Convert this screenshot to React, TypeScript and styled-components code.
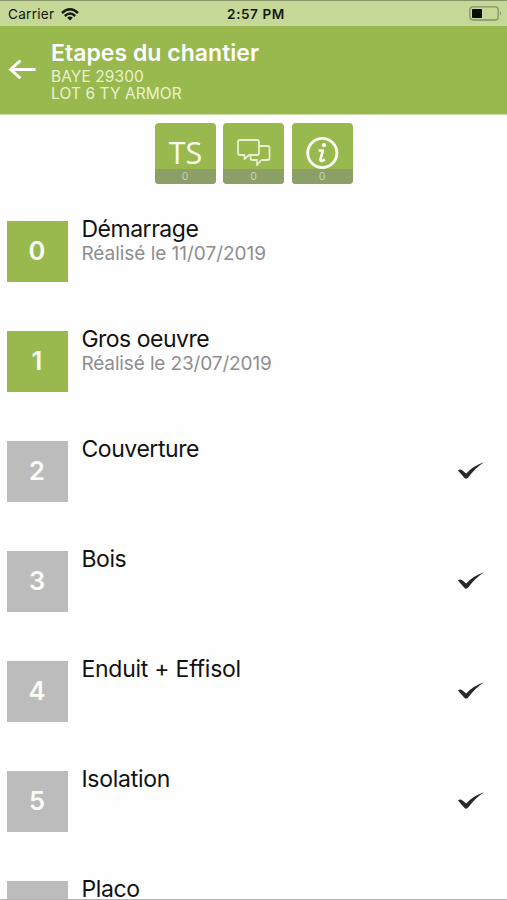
import React from "react";
import styled, { createGlobalStyle } from "styled-components";

const GlobalStyle = createGlobalStyle`
  * { box-sizing: border-box; }
  body { margin: 0; background: #fefefe; font-family: Inter, "Liberation Sans", sans-serif; }
`;

const Screen = styled.div`
  width: 507px;
  height: 900px;
  overflow: hidden;
  display: flex;
  flex-direction: column;
  background: #fefefe;
  border-bottom: 1px solid #b4b4b4;
`;

const StatusBar = styled.div`
  height: 26px;
  flex: none;
  display: grid;
  grid-template-columns: 1fr auto 1fr;
  align-items: center;
  padding: 1px 5px 0 8px;
  background: #c5d898;
  border-top: 1px solid #87956a;
  color: #15180f;
`;

const Carrier = styled.div`
  display: flex;
  align-items: center;
  gap: 7px;
  font-size: 13.6px;
  letter-spacing: 0.25px;
`;

const Clock = styled.div`
  padding-left: 2px;
  font-size: 13.6px;
  font-weight: 600;
  letter-spacing: 0.55px;
`;

const BatterySlot = styled.div`
  display: flex;
  justify-content: flex-end;
  padding-bottom: 2px;
`;

const Header = styled.header`
  height: 89px;
  flex: none;
  display: flex;
  background: #99b94f;
  border-bottom: 1px solid #cbdca6;
  padding: 13px 8px 0;
`;

const BackButton = styled.button`
  width: 43px;
  height: 60px;
  padding: 0;
  border: 0;
  background: none;
  display: flex;
  align-items: center;
`;

const Title = styled.h1`
  margin: 0 0 1px;
  font-size: 23px;
  line-height: 28px;
  font-weight: 600;
  letter-spacing: 0.03px;
  color: #fff;
  white-space: nowrap;
`;

const Subtitle = styled.div`
  font-size: 15.5px;
  line-height: 17px;
  letter-spacing: 0.08px;
  color: #e9f2d0;
  white-space: nowrap;
`;

const Actions = styled.nav`
  flex: none;
  display: flex;
  justify-content: center;
  gap: 7.5px;
  padding: 8px 0 0;
  height: 75px;
`;

const ActionTile = styled.button`
  width: 61px;
  height: 61px;
  padding: 0;
  border: 0;
  border-radius: 4px;
  overflow: hidden;
  display: flex;
  flex-direction: column;
  background: #99b94f;
`;

const TileFace = styled.span`
  height: 46px;
  width: 100%;
  flex: none;
  display: flex;
  align-items: center;
  justify-content: center;
  padding-top: 14px;
  color: #fbfdf2;
`;

const TileText = styled.span`
  padding: 0 0 2px 1px;
  font: 30.5px/30px "Open Sans", sans-serif;
`;

const TileCount = styled.span`
  flex: 1;
  width: 100%;
  background: #8b9f66;
  color: #c9d6ac;
  font: 10.5px/16px Inter, sans-serif;
  text-align: center;
`;

const StepList = styled.main`
  flex: 1;
  min-height: 0;
  overflow: hidden;
  padding: 30.5px 22.5px 0 7px;
`;

const StepRow = styled.div`
  height: 110px;
  display: flex;
`;

const StepNumber = styled.div<{ $done: boolean }>`
  width: 61px;
  height: 61px;
  flex: none;
  margin-right: 13.4px;
  display: flex;
  align-items: center;
  justify-content: center;
  padding: 0 1px 2px 0;
  background: ${(p) => (p.$done ? "#99b94f" : "#bcbcbc")};
  color: #fbfbf8;
  font-size: 25.5px;
  font-weight: 600;
`;

const StepText = styled.div`
  flex: 1;
  margin-top: -5.5px;
`;

const StepName = styled.div<{ $spacing: number }>`
  font-size: 23px;
  line-height: 28px;
  color: #121212;
  letter-spacing: ${(p) => p.$spacing}px;
`;

const StepDate = styled.div<{ $spacing: number }>`
  font-size: 19px;
  line-height: 20px;
  padding-top: 1px;
  color: #8e8e8e;
  letter-spacing: ${(p) => p.$spacing}px;
`;

const CheckSlot = styled.div`
  height: 60px;
  display: flex;
  align-items: center;
`;

const steps = [
  { name: "Démarrage", date: "Réalisé le 11/07/2019", spacing: -0.47, dateSpacing: -0.03 },
  { name: "Gros oeuvre", date: "Réalisé le 23/07/2019", spacing: -0.5, dateSpacing: -0.13 },
  { name: "Couverture", spacing: -0.42 },
  { name: "Bois", spacing: -0.4 },
  { name: "Enduit + Effisol", spacing: -0.24 },
  { name: "Isolation", spacing: -0.25 },
  { name: "Placo", spacing: -0.35 },
];

const WifiIcon = () => (
  <svg width="18" height="13" viewBox="0 0 18 13" fill="none" stroke="#15180f" strokeWidth="2.4">
    <path d="M1 5 Q9 -2.4 17 5" />
    <path d="M3.8 8 Q9 3.2 14.2 8" />
    <path d="M9 12.5 L6.2 9.7 Q9 7.5 11.8 9.7Z" fill="#15180f" stroke="none" />
  </svg>
);

const BatteryIcon = () => (
  <svg width="33" height="15" viewBox="0 0 33 15">
    <rect x="0.8" y="0.8" width="28.4" height="13.2" rx="3.2" fill="none" stroke="#829064" strokeWidth="1.3" />
    <path d="M31 5 Q33 7.4 31 9.8Z" fill="#829064" />
    <rect x="3" y="3" width="10" height="9" rx="0.8" fill="#090b05" />
  </svg>
);

const BackIcon = () => (
  <svg width="28" height="20" viewBox="0 0 28 20" fill="none" stroke="#fff" strokeWidth="2.9">
    <path d="M27.5 10.5H3 M12.5 1.5L2.6 10.5L12.5 19.3" />
  </svg>
);

const ChatIcon = () => (
  <svg width="34" height="30" viewBox="0 0 34 30" fill="none" stroke="#e6f0cd" strokeWidth="1.8" strokeLinejoin="round">
    <path d="M12 17L7.5 21V17H3Q1 17 1 15V4Q1 2 3 2H20Q22 2 22 4V15Q22 17 20 17H12Z" />
    <path d="M22 8H30.5Q32.5 8 32.5 10V20Q32.5 22 30.5 22H24.5L20 27V22H15.5Q13.5 22 13.5 20V17" />
  </svg>
);

const InfoIcon = () => (
  <svg width="34" height="34" viewBox="0 0 34 34" fill="none" stroke="#fbfdf2">
    <circle cx="17.3" cy="17" r="14.6" strokeWidth="2.9" />
    <circle cx="19" cy="9.2" r="2.1" fill="#fbfdf2" stroke="none" />
    <path d="M13.6 14.5H17.9L15.6 22.8Q15 26.5 19.9 23.7" strokeWidth="2.7" strokeLinejoin="round" />
  </svg>
);

const CheckIcon = () => (
  <svg width="28" height="20" viewBox="0 0 28 20">
    <path d="M1 9.5Q3.2 7.6 5.5 9.5L9.2 12.5Q16 4.8 27 1.2Q18.5 6.7 11.4 16.2Q9.2 19 7.1 16.4Z" fill="#292929" />
  </svg>
);

const tiles = [
  { label: "TS", icon: <TileText>TS</TileText>, count: 0 },
  { label: "Messages", icon: <ChatIcon />, count: 0 },
  { label: "Informations", icon: <InfoIcon />, count: 0 },
];

export default function App() {
  return (
    <Screen>
      <GlobalStyle />
      <StatusBar>
        <Carrier>Carrier <WifiIcon /></Carrier>
        <Clock>2:57 PM</Clock>
        <BatterySlot><BatteryIcon /></BatterySlot>
      </StatusBar>
      <Header>
        <BackButton aria-label="Retour"><BackIcon /></BackButton>
        <div>
          <Title>Etapes du chantier</Title>
          <Subtitle>BAYE 29300</Subtitle>
          <Subtitle>LOT 6 TY ARMOR</Subtitle>
        </div>
      </Header>
      <Actions>
        {tiles.map((tile) => (
          <ActionTile key={tile.label} aria-label={tile.label}>
            <TileFace>{tile.icon}</TileFace>
            <TileCount>{tile.count}</TileCount>
          </ActionTile>
        ))}
      </Actions>
      <StepList>
        {steps.map((step, index) => (
          <StepRow key={step.name}>
            <StepNumber $done={Boolean(step.date)}>{index}</StepNumber>
            <StepText>
              <StepName $spacing={step.spacing}>{step.name}</StepName>
              {step.date && <StepDate $spacing={step.dateSpacing ?? 0}>{step.date}</StepDate>}
            </StepText>
            {!step.date && <CheckSlot><CheckIcon /></CheckSlot>}
          </StepRow>
        ))}
      </StepList>
    </Screen>
  );
}
